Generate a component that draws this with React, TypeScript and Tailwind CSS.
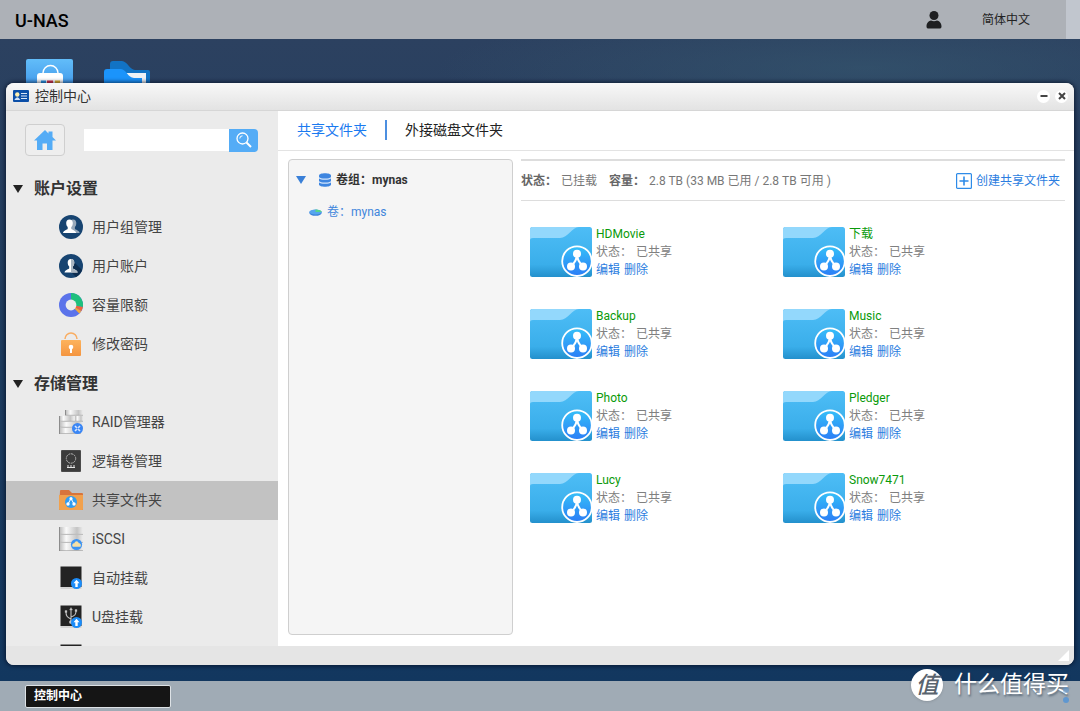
import React from 'react';

type IconProps = { className?: string };

const BagIcon = () => (
  <svg width="47" height="47" viewBox="0 0 47 47" aria-hidden="true">
    <defs>
      <linearGradient id="bagBg" x1="0" y1="0" x2="0" y2="1">
        <stop offset="0" stopColor="#62bdf9" />
        <stop offset="1" stopColor="#2a7fe0" />
      </linearGradient>
    </defs>
    <rect width="47" height="47" rx="2" fill="url(#bagBg)" />
    <path d="M17 15v-1a7.500 7.500 0 0 1 15 0v1" fill="none" stroke="#fff" strokeWidth="1.400" />
    <rect x="11" y="14" width="26" height="24" rx="3" fill="#fff" />
    <rect x="15" y="21.500" width="5" height="5" fill="#2f9bea" />
    <rect x="21" y="21.500" width="6" height="5" fill="#e0344a" />
    <rect x="29" y="21.500" width="5" height="5" fill="#f0b92e" />
  </svg>
);

const FilesIcon = () => (
  <svg width="47" height="45" viewBox="0 0 47 45" aria-hidden="true">
    <path d="M6 4a3 3 0 0 1 3-3h9c5 0 8 9 13 9h13a2 2 0 0 1 2 2v30H6z" fill="#1273c4" />
    <path d="M22 13h20v24h-5V18H22z" fill="#eef2f6" />
    <path d="M0 12a3 3 0 0 1 3-3h14c5 0 7 9 13 9h8v25H0z" fill="#1b94fb" />
  </svg>
);

const UserIcon = () => (
  <svg width="16" height="18" viewBox="0 0 16 18" fill="#1f2022" aria-hidden="true">
    <circle cx="8" cy="4.500" r="4.500" />
    <path d="M.5 15.500C.5 11.500 3 10 5 9.500c2 1 4 1 6 0 2 .5 4.500 2 4.500 6 0 1.500-.8 2-2 2h-11c-1.200 0-2-.5-2-2z" />
  </svg>
);

const CardIcon = () => (
  <svg width="16" height="12" viewBox="0 0 16 12" aria-hidden="true">
    <rect width="16" height="12" rx="1" fill="#0c4fa8" />
    <path d="M1.300 10q3-5.500 6 0z" fill="#cfe2fa" />
    <circle cx="4.300" cy="4.500" r="2.200" fill="#fff0b0" />
    <path d="M8 3.500h6M8 6h6M8 8.500h6" stroke="#d9e6f7" strokeWidth="1.100" />
  </svg>
);

const HomeIcon = () => (
  <svg width="22" height="20" viewBox="0 0 22 20" fill="#54acf6" aria-hidden="true">
    <path d="M11 0 0 10.500h3V20h5.500v-6.500h4.500V20H18.500v-9.500H22L18.500 7V1.500h-4v2z" />
  </svg>
);

const SearchIcon = () => (
  <svg width="16" height="16" viewBox="0 0 16 16" fill="none" stroke="#fff" aria-hidden="true">
    <circle cx="6.500" cy="6.500" r="5.500" strokeWidth="1.300" />
    <path d="M3.800 6.500a2.700 2.700 0 0 1 2.700-2.700" strokeWidth="1" />
    <path d="m10.500 10.500 4.500 4.500" strokeWidth="2" />
  </svg>
);

const person = 'M10.500 4.500c2.300 0 3.300 1.600 3.300 3.600 0 1.900-.6 3.300-1.400 4v1.600c.4 1.100 4.200 1.300 4.800 4.300H4c.6-3 4.300-3.200 4.700-4.300v-1.600c-.9-.7-1.500-2.100-1.500-4 0-2 1-3.600 3.300-3.600z';

const GroupIcon = () => (
  <svg width="24" height="24" viewBox="0 0 24 24" aria-hidden="true">
    <circle cx="12" cy="12" r="12" fill="#174471" />
    <path d={person} transform="translate(3.500 0)" fill="#97a9bb" />
    <path d={person} fill="#fff" />
  </svg>
);

const AccountIcon = () => (
  <svg width="24" height="24" viewBox="0 0 24 24" aria-hidden="true">
    <circle cx="12" cy="12" r="12" fill="#174471" />
    <path d="m14 7 9 9a12 12 0 0 1-6 7l-5-5z" fill="#0d2d50" />
    <path d={person} transform="translate(1.500 .5)" fill="#fff" />
    <path d="M12 5c2.300 0 3.300 1.600 3.300 3.600 0 1.900-.6 3.300-1.400 4v1.600c.4 1.100 4.200 1.300 4.800 4.300H12z" fill="#aab6c2" />
  </svg>
);

const QuotaIcon = () => (
  <svg width="24" height="24" viewBox="0 0 24 24" aria-hidden="true">
    <circle cx="12" cy="12" r="12" fill="#5b73ea" />
    <path d="M12 12V0a12 12 0 0 1 11.900 14z" fill="#1fc07d" />
    <path d="m12 12 11.900 2a12 12 0 0 1-1.600 4z" fill="#f0643c" />
    <path d="m12 12 10.300 6a12 12 0 0 1-2 2.500z" fill="#f3a73c" />
    <circle cx="12" cy="12" r="5.400" fill="#ececec" />
  </svg>
);

const LockIcon = () => (
  <svg width="20" height="24" viewBox="0 0 20 24" aria-hidden="true">
    <defs>
      <linearGradient id="lockBody" x1="0" y1="0" x2="0" y2="1">
        <stop offset="0" stopColor="#fdb35c" />
        <stop offset="1" stopColor="#f49540" />
      </linearGradient>
    </defs>
    <path d="M4 7a6 6 0 0 1 12 0" fill="none" stroke="#f9ad62" strokeWidth="1.500" />
    <rect y="8" width="20" height="16" rx="1" fill="url(#lockBody)" />
    <circle cx="10" cy="15" r="2.300" fill="#fff" />
    <path d="M9 15h2v6H9z" fill="#fff" />
  </svg>
);

const ServerBase = ({ raid }: { raid: boolean }) => (
  <>
    <defs>
      <linearGradient id="steel" x1="0" y1="0" x2="1" y2="0">
        <stop offset="0" stopColor="#b6b6b6" />
        <stop offset=".3" stopColor="#fafafa" />
        <stop offset=".75" stopColor="#c4c4c4" />
        <stop offset="1" stopColor="#ededed" />
      </linearGradient>
    </defs>
    {raid ? (
      <g fill="url(#steel)">
        <rect x="6" width="18" height="5" />
        <rect y="6" width="15" height="5" />
        <rect x="16" y="6" width="8" height="5" />
        <rect y="12" width="24" height="5" />
        <rect y="18" width="22" height="5.500" />
      </g>
    ) : (
      <g fill="url(#steel)">
        <rect width="24" height="7" />
        <rect y="8" width="24" height="7" />
        <rect y="16" width="24" height="8" />
      </g>
    )}
    <path d={raid ? 'M6 5.300h18M0 11.300h24M0 17.300h24M0 23.600h22' : 'M0 7.400h24M0 15.400h24M0 23.600h24'} stroke="#a2a2a2" strokeWidth=".7" />
    <path d={raid ? 'M.5 6v18M6.500 0v5' : 'M.5 0v24'} stroke="#8c8c8c" strokeWidth="1" />
  </>
);

const RaidIcon = () => (
  <svg width="24" height="24" viewBox="0 0 24 24" aria-hidden="true">
    <ServerBase raid />
    <circle cx="18.500" cy="18.500" r="5.500" fill="#3a86f5" />
    <path d="m16 16 5 5m0-5-5 5" stroke="#d8e8ff" strokeWidth="1.600" />
    <circle cx="18.500" cy="18.500" r="1" fill="#3a86f5" />
  </svg>
);

const IscsiIcon = () => (
  <svg width="24" height="24" viewBox="0 0 24 24" aria-hidden="true">
    <ServerBase raid={false} />
    <circle cx="17.500" cy="17.500" r="5.600" fill="#3b93f4" />
    <path d="M13.800 19.800c-1.500-2.500.5-3.800 1.500-3.600.8-2.700 3.800-2.700 4.500 0 1.500-.1 2.800 1.600 1.600 3.600z" fill="#f6e0a6" />
  </svg>
);

const VolumeIcon = () => (
  <svg width="20" height="22" viewBox="0 0 20 22" aria-hidden="true">
    <rect width="20" height="22" rx="1" fill="#4b4b4b" />
    <rect x="1" y="1" width="18" height="20" fill="#3c3c3c" />
    <circle cx="10" cy="8.500" r="4.700" fill="none" stroke="#b3b3b3" strokeWidth="1" strokeDasharray="2 .7" />
    <path d="M6 16h2m1 0h2m1 0h2M6 17.500h8" stroke="#e6e6e6" strokeWidth="1" />
  </svg>
);

const ShareIcon = () => (
  <svg width="24" height="20" viewBox="0 0 24 20" aria-hidden="true">
    <path d="M1 1q0-1 1-1h8l3 3h10q1 0 1 1v15q0 1-1 1H1q-1 0-1-1z" fill="#d8743b" />
    <path d="M0 5h24v14q0 1-1 1H1q-1 0-1-1z" fill="#f1a14d" />
    <circle cx="12" cy="12" r="6" fill="#2f9df2" />
    <path d="m9 14 3-5.500 3 5.500" fill="none" stroke="#fff" strokeWidth="1" />
    <circle cx="12" cy="8.700" r="1.600" fill="#fff" />
    <circle cx="9" cy="14" r="1.700" fill="#fff" />
    <circle cx="15" cy="14" r="1.700" fill="#fff" />
  </svg>
);

const DiskIcon = ({ usb }: { usb?: boolean }) => (
  <svg width="22" height="24" viewBox="0 0 22 24" aria-hidden="true">
    <path d="M.5 20h21v3H.5z" fill="#d4d4d4" />
    <path d="M.5.500h21V21H.5z" fill="#232323" />
    {usb && (
      <g stroke="#c4c4c4" fill="none" strokeWidth="1.100">
        <path d="M11 4v13M11 14c-4-2-5-3-5-7M11 12c4-1.500 5-2.500 5-6" />
        <path d="m9.500 5 1.500-2.500L12.500 5zM5 5.500h2v2H5zM15 4.500h2v2h-2z" fill="#c4c4c4" strokeWidth=".3" />
        <circle cx="11" cy="17" r="1.300" fill="#c4c4c4" />
      </g>
    )}
    <circle cx="16.500" cy="17.500" r="5.500" fill="#1c8cf8" />
    <path d="m16.500 13.800 3 3.400h-1.800v3.800h-2.400v-3.800h-1.800z" fill="#fff" />
  </svg>
);

const PoolIcon = () => (
  <svg width="12" height="14" viewBox="0 0 12 14" aria-hidden="true">
    <path d="M0 2.500C0-.5 12-.5 12 2.500v9c0 3-12 3-12 0z" fill="#3f86e0" />
    <path d="M0 4.500c1 2.200 11 2.200 12 0M0 8.500c1 2.200 11 2.200 12 0" fill="none" stroke="#d3e5fb" strokeWidth="1.100" />
  </svg>
);

const DiscIcon = () => (
  <svg width="13" height="7" viewBox="0 0 13 7" aria-hidden="true">
    <ellipse cx="6.500" cy="3.800" rx="6.200" ry="3" fill="#3d83da" />
    <ellipse cx="6.500" cy="3" rx="6.200" ry="2.500" fill="#56a5ee" />
    <path d="M6.500 3V.5c3 0 6 1 6.200 2.500z" fill="#55d68a" />
  </svg>
);

const FolderIcon = () => (
  <svg width="63" height="50" viewBox="0 0 63 50" className="shrink-0" aria-hidden="true">
    <defs>
      <linearGradient id="folderBody" x1="0" y1="0" x2="0" y2="1">
        <stop offset="0" stopColor="#4dbdf6" />
        <stop offset=".75" stopColor="#3aaeea" />
        <stop offset="1" stopColor="#2390cc" />
      </linearGradient>
      <linearGradient id="shareDisc" x1="0" y1="0" x2="0" y2="1">
        <stop offset="0" stopColor="#35c0f8" />
        <stop offset="1" stopColor="#2b7df6" />
      </linearGradient>
    </defs>
    <rect width="62" height="50" rx="2.500" fill="url(#folderBody)" />
    <path d="M0 13V2.500A2.500 2.500 0 0 1 2.500 0H49c-7 0-11 11-19 11H3q-3 0-3 2z" fill="#93d8fc" />
    <circle cx="47" cy="34.200" r="14.800" fill="url(#shareDisc)" stroke="#fff" strokeWidth="1.800" />
    <path d="M41 39q6-5 6-12 0 7 6 12" fill="none" stroke="#fff" strokeWidth="2" />
    <circle cx="47" cy="26.800" r="4" fill="#fff" />
    <circle cx="41" cy="39.500" r="4" fill="#fff" />
    <circle cx="53" cy="39.500" r="4" fill="#fff" />
  </svg>
);

const Triangle = ({ className }: IconProps) => (
  <svg width="10" height="8" viewBox="0 0 10 8" className={className} fill="currentColor" aria-hidden="true">
    <path d="M0 0h10L5 8z" />
  </svg>
);

const groups = [
  {
    title: '账户设置',
    items: [
      { label: '用户组管理', icon: <GroupIcon /> },
      { label: '用户账户', icon: <AccountIcon /> },
      { label: '容量限额', icon: <QuotaIcon /> },
      { label: '修改密码', icon: <LockIcon /> },
    ],
  },
  {
    title: '存储管理',
    items: [
      { label: 'RAID管理器', icon: <RaidIcon /> },
      { label: '逻辑卷管理', icon: <VolumeIcon /> },
      { label: '共享文件夹', icon: <ShareIcon />, active: true },
      { label: 'iSCSI', icon: <IscsiIcon /> },
      { label: '自动挂载', icon: <DiskIcon /> },
      { label: 'U盘挂载', icon: <DiskIcon usb /> },
      { label: '', icon: <DiskIcon /> },
    ],
  },
];

const folders = ['HDMovie', '下载', 'Backup', 'Music', 'Photo', 'Pledger', 'Lucy', 'Snow7471'];

function Sidebar() {
  return (
    <aside className="w-[272px] shrink-0 overflow-hidden bg-[#ebebeb]">
      <div className="flex h-[58px] items-center pl-[19px]">
        <button aria-label="主页" className="flex h-8 w-10 items-center justify-center rounded border border-[#cfcfcf] bg-[#eeeeee]">
          <HomeIcon />
        </button>
        <form className="ml-[19px] flex items-center" onSubmit={(e) => e.preventDefault()}>
          <input aria-label="搜索" className="h-[22px] w-[145px] bg-white px-2 text-xs outline-none" />
          <button aria-label="搜索" className="flex h-[23px] w-[29px] items-center justify-center rounded-r bg-[#54acf6]">
            <SearchIcon />
          </button>
        </form>
      </div>
      <nav>
        {groups.map((group) => (
          <section key={group.title}>
            <h2 className="flex h-[39px] items-center gap-[11px] pl-[7px] text-base font-bold text-[#333]">
              <Triangle className="text-[#222]" />
              {group.title}
            </h2>
            <ul>
              {group.items.map((item, i) => (
                <li key={i}>
                  <a href="#" className={`flex h-[39px] items-center gap-[9px] pb-px pl-[53px] text-sm text-[#444] ${item.active ? 'bg-[#c2c2c2]' : ''}`}>
                    <span className="flex w-6 justify-center">{item.icon}</span>
                    {item.label}
                  </a>
                </li>
              ))}
            </ul>
          </section>
        ))}
      </nav>
    </aside>
  );
}

function FolderCard({ name }: { name: string }) {
  return (
    <article className="flex h-[50px] items-center gap-[3px]">
      <FolderIcon />
      <div className="leading-[18px]">
        <h3 className="text-[#0a9a0a]">{name}</h3>
        <p className="flex gap-1 text-[#808080]">
          <span>状态：</span>
          <span>已共享</span>
        </p>
        <p className="flex gap-1 text-[#2b7de0]">
          <a href="#">编辑</a>
          <a href="#">删除</a>
        </p>
      </div>
    </article>
  );
}

function Content() {
  return (
    <section className="flex min-w-0 flex-1 flex-col bg-white">
      <div className="flex h-10 shrink-0 items-center border-b border-[#e3e3e3] pb-[2px] pl-[19px] text-sm">
        <button className="text-[#1a7af0]">共享文件夹</button>
        <span className="mx-[18px] h-5 w-[2px] bg-[#4c8fe0]" />
        <button className="text-[#222]">外接磁盘文件夹</button>
      </div>
      <div className="flex min-h-0 flex-1 gap-2 pt-2 pr-[9px] pb-[11px] pl-[10px] text-xs">
        <div className="w-[225px] shrink-0 rounded border border-[#cfcfcf] bg-[#f5f5f5]">
          <div className="flex h-10 items-center pl-[7px] font-bold text-[#333]">
            <Triangle className="text-[#3a80d8]" />
            <span className="ml-[13px] mr-[5px]"><PoolIcon /></span>
            <span>卷组：mynas</span>
          </div>
          <a href="#" className="flex h-6 items-center gap-[5px] pl-5 text-[#3f86dc]">
            <DiscIcon />
            <span>卷：mynas</span>
          </a>
        </div>
        <div className="min-w-0 flex-1">
          <div className="flex h-[42px] items-center border-t-2 border-b border-[#dddddd] text-[#777]">
            <b className="text-[#666]">状态：</b>
            <span className="ml-1">已挂载</span>
            <b className="ml-3 text-[#666]">容量：</b>
            <span className="ml-1">2.8 TB (33 MB 已用 / 2.8 TB 可用 )</span>
            <button className="mr-[5px] ml-auto flex items-center gap-1 text-[#2b7de0]">
              <svg width="16" height="16" viewBox="0 0 16 16" fill="none" stroke="#2e8be8" aria-hidden="true">
                <rect x=".6" y=".6" width="14.800" height="14.800" rx="1" strokeWidth="1.200" />
                <path d="M8 3.500v9M3.500 8h9" strokeWidth="1.600" />
              </svg>
              创建共享文件夹
            </button>
          </div>
          <div className="grid grid-cols-[repeat(auto-fill,253px)] gap-y-8 pt-[26px] pl-[9px]">
            {folders.map((name) => (
              <FolderCard key={name} name={name} />
            ))}
          </div>
        </div>
      </div>
    </section>
  );
}

export default function App() {
  return (
    <div className="relative flex h-screen flex-col overflow-hidden bg-[#12365d] font-['Roboto','Noto_Sans_CJK_SC',sans-serif]">
      <header className="flex h-[39px] shrink-0 items-center bg-[#adb1b7] text-black">
        <h1 className="pt-[2px] pl-[15px] text-lg font-medium">U-NAS</h1>
        <div className="ml-auto flex h-full items-center">
          <button aria-label="用户"><UserIcon /></button>
          <button className="ml-10 mr-9 text-xs text-[#222]">简体中文</button>
          <span className="h-full w-[14px] bg-[#c1c6ce]" />
        </div>
      </header>

      <main className="relative min-h-0 flex-1 bg-linear-to-b from-[#2c4160] via-[#1d3c5e] to-[#12375f]">
        <div className="absolute top-0 right-0 h-24 w-2/3 bg-[radial-gradient(ellipse_at_70%_30%,#36587099,transparent_60%)]" />
        <div className="relative flex items-start gap-[31px] pt-5 pl-[26px]">
          <a href="#" aria-label="应用中心"><BagIcon /></a>
          <a href="#" aria-label="文件管理" className="pt-px"><FilesIcon /></a>
        </div>

        <div className="absolute inset-x-[6px] top-11 bottom-4 flex flex-col overflow-hidden rounded-lg bg-[#e5e5e5] shadow-[0_0_4px_1px_rgba(0,10,30,0.7)]">
          <div className="flex h-7 shrink-0 items-center gap-[6px] border-b border-[#d6d6d6] bg-linear-to-b from-[#f8f8f8] to-[#e3e3e3] pr-[6px] pb-px pl-[7px] text-sm text-[#333]">
            <CardIcon />
            <span>控制中心</span>
            <div className="ml-auto flex gap-[5px]">
              <button aria-label="最小化" className="flex size-[13px] items-center justify-center rounded-full bg-white">
                <svg width="8" height="8" viewBox="0 0 8 8" stroke="#444" strokeWidth="2" aria-hidden="true"><path d="M.5 4h7" /></svg>
              </button>
              <button aria-label="关闭" className="flex size-[13px] items-center justify-center rounded-full bg-white">
                <svg width="8" height="8" viewBox="0 0 8 8" stroke="#444" strokeWidth="2" aria-hidden="true"><path d="m1 1 6 6m0-6L1 7" /></svg>
              </button>
            </div>
          </div>
          <div className="flex min-h-0 flex-1">
            <Sidebar />
            <Content />
          </div>
          <footer className="flex h-[19px] shrink-0 items-center justify-end bg-[#e5e5e5] pr-[5px]">
            <svg width="11" height="11" viewBox="0 0 11 11" fill="#fff" aria-hidden="true"><path d="M11 0v11H0z" /></svg>
          </footer>
        </div>
      </main>

      <footer className="flex h-[30px] shrink-0 items-center bg-[#a0abb5] pl-[25px]">
        <button className="h-[23px] w-[146px] rounded-xs border border-[#dde2e6] bg-[#151515] pl-2 text-left text-xs font-bold text-white">控制中心</button>
      </footer>

      <div className="absolute right-[11px] bottom-[10px] flex items-center gap-[11px] text-white">
        <span className="flex size-8 items-center justify-center rounded-full bg-white text-[23px] leading-none font-medium text-[#59636e] italic shadow">值</span>
        <span className="text-[23px] leading-8 text-shadow-[1px_2px_2px_rgba(30,50,70,0.5)]">什么值得买</span>
        <span className="absolute right-0 bottom-2 size-[6px] rounded-full bg-[#5f97d0] opacity-60" />
        <span className="absolute right-0 -bottom-[2px] size-[6px] rounded-full bg-[#5f97d0]" />
      </div>
    </div>
  );
}
